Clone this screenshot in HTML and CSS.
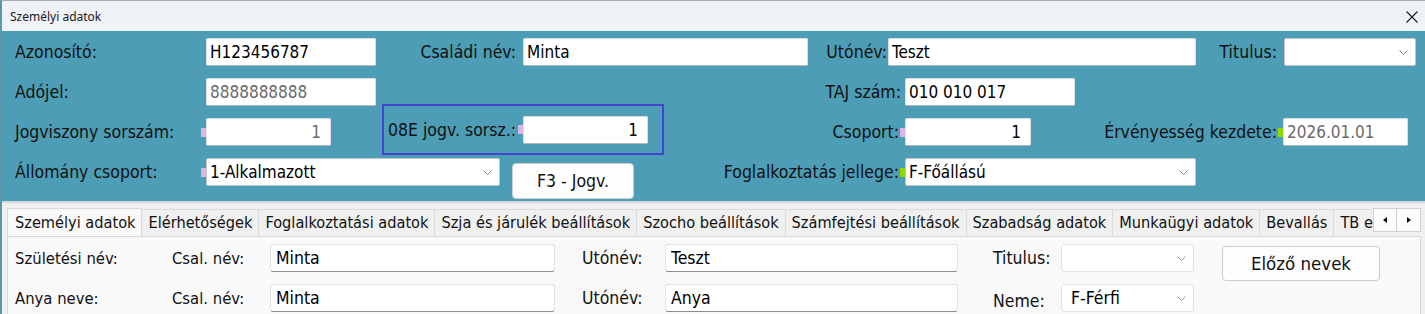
FILE: index.html
```html
<!DOCTYPE html>
<html lang="hu">
<head>
  <meta charset="UTF-8" />
  <title>Személyi adatok</title>
  <link rel="stylesheet" href="styles.css">
</head>
<body>
  <div class="window">
    <div class="titlebar">
      <span class="title">Személyi adatok</span>
      <svg class="close" width="12" height="12" viewBox="0 0 12 12">
        <path d="M0.5 0.5 L11.5 11.5 M11.5 0.5 L0.5 11.5" stroke="#1a1a1a" stroke-width="1.1" fill="none"/>
      </svg>
    </div>

    <div class="header">
      <div class="row">
        <label class="lbl w191">Azonosító:</label>
        <input class="inp w170" type="text" value="H123456787">
        <label class="lbl right w147 pr7">Családi név:</label>
        <input class="inp w285" type="text" value="Minta">
        <label class="lbl right w80 pr1">Utónév:</label>
        <input class="inp w308" type="text" value="Teszt">
        <label class="lbl right w88 pr7">Titulus:</label>
        <div class="sel w132"><span></span><svg class="chev" width="9" height="5" viewBox="0 0 9 5"><path d="M0.5 0.5 L4.5 4.5 L8.5 0.5" stroke="#888" fill="none"/></svg></div>
      </div>

      <div class="row">
        <label class="lbl w191">Adójel:</label>
        <input class="inp w170 gray" type="text" value="8888888888">
        <label class="lbl right w529 pr4">TAJ szám:</label>
        <input class="inp w170" type="text" value="010 010 017">
      </div>

      <div class="row">
        <label class="lbl w186">Jogviszony sorszám:</label>
        <span class="mark pink"></span>
        <input class="inp w125 num gray" type="text" value="1">
        <span class="w51"></span>
        <div class="focusbox">
          <label class="lbl grow">08E jogv. sorsz.:</label>
          <span class="mark pink"></span>
          <input class="inp w125 num" type="text" value="1">
        </div>
        <label class="lbl right w236 pr1">Csoport:</label>
        <span class="mark pink"></span>
        <input class="inp w126 num" type="text" value="1">
        <label class="lbl right w247 pr1">Érvényesség kezdete:</label>
        <span class="mark green"></span>
        <input class="inp w125 gray" type="text" value="2026.01.01">
      </div>

      <div class="row top">
        <label class="lbl w186">Állomány csoport:</label>
        <span class="mark pink"></span>
        <div class="sel w294"><span>1-Alkalmazott</span><svg class="chev" width="9" height="5" viewBox="0 0 9 5"><path d="M0.5 0.5 L4.5 4.5 L8.5 0.5" stroke="#888" fill="none"/></svg></div>
        <button class="btn jogv">F3 - Jogv.</button>
        <label class="lbl right w266 pr1">Foglalkoztatás jellege:</label>
        <span class="mark green"></span>
        <div class="sel w291"><span>F-Főállású</span><svg class="chev" width="9" height="5" viewBox="0 0 9 5"><path d="M0.5 0.5 L4.5 4.5 L8.5 0.5" stroke="#888" fill="none"/></svg></div>
      </div>
    </div>

    <div class="tabarea">
      <div class="tabstrip">
        <div class="tablist">
          <div class="tab active">Személyi adatok</div>
          <div class="tab">Elérhetőségek</div>
          <div class="tab">Foglalkoztatási adatok</div>
          <div class="tab">Szja és járulék beállítások</div>
          <div class="tab">Szocho beállítások</div>
          <div class="tab">Számfejtési beállítások</div>
          <div class="tab">Szabadság adatok</div>
          <div class="tab">Munkaügyi adatok</div>
          <div class="tab">Bevallás</div>
          <div class="tab">TB ellátások</div>
        </div>
        <div class="scrollbtns">
          <span class="sbtn"><svg width="4" height="6" viewBox="0 0 4 6"><path d="M4 0 L0 3 L4 6 Z" fill="#111"/></svg></span>
          <span class="sbtn"><svg width="4" height="6" viewBox="0 0 4 6"><path d="M0 0 L4 3 L0 6 Z" fill="#111"/></svg></span>
        </div>
      </div>

      <div class="tabpanel">
        <div class="prow">
          <label class="plbl w157">Születési név:</label>
          <label class="plbl w98">Csal. név:</label>
          <input class="pinp w285" type="text" value="Minta">
          <label class="nlbl w83 ml27">Utónév:</label>
          <input class="pinp w293" type="text" value="Teszt">
          <label class="nlbl w68 ml35">Titulus:</label>
          <div class="psel w133"><span></span><svg class="chev" width="9" height="5" viewBox="0 0 9 5"><path d="M0.5 0.5 L4.5 4.5 L8.5 0.5" stroke="#999" fill="none"/></svg></div>
          <button class="btn elozo">Előző nevek</button>
        </div>
        <div class="prow">
          <label class="plbl w157">Anya neve:</label>
          <label class="plbl w98">Csal. név:</label>
          <input class="pinp w285" type="text" value="Minta">
          <label class="nlbl w83 ml27">Utónév:</label>
          <input class="pinp w293" type="text" value="Anya">
          <label class="nlbl w68 ml35 low">Neme:</label>
          <div class="psel w133"><span>F-Férfi</span><svg class="chev" width="9" height="5" viewBox="0 0 9 5"><path d="M0.5 0.5 L4.5 4.5 L8.5 0.5" stroke="#999" fill="none"/></svg></div>
        </div>
      </div>
    </div>
  </div>
</body>
</html>
```

FILE: styles.css
```css
body {
  margin: 0;
  background: #f0f0f0;
  font-family: "DejaVu Sans Condensed", "DejaVu Sans", sans-serif;
  font-stretch: condensed;
  color: #111;
}
.window {
  height: 314px;
  border-top: 1px solid #a8acb0;
  border-left: 2px solid #5c97a6;
  box-sizing: border-box;
  overflow: hidden;
}
.titlebar {
  height: 30px;
  background: #eff2f6;
  display: flex;
  align-items: center;
  justify-content: space-between;
  padding: 0 7px 0 8px;
}
.title {
  font-family: "Noto Sans", sans-serif;
  font-stretch: normal;
  font-size: 12px;
  color: #1a1a1a;
}
.close {
  margin-top: 1px;
}

/* teal header */
.header {
  background: #4c9db5;
  padding: 7px 0 3px 13px;
  border-bottom: 2px solid #d4d8da;
  display: flex;
  flex-direction: column;
  gap: 12px;
}
.row {
  display: flex;
  align-items: center;
  height: 28px;
}
.row.top {
  align-items: flex-start;
  height: 40px;
}
.lbl {
  font-size: 17.5px;
  white-space: nowrap;
  flex-shrink: 0;
  line-height: 28px;
}
.lbl.right { text-align: right; }
.lbl.grow { flex: 1; padding-left: 2px; }
.inp, .sel {
  height: 28px;
  box-sizing: border-box;
  background: #fff;
  border: 1px solid #dedede;
  border-bottom-color: #b4b4b4;
  border-radius: 2px;
  font-family: inherit;
  font-stretch: condensed;
  font-size: 17px;
  color: #000;
  padding: 0 3px;
  flex-shrink: 0;
  outline: none;
}
.inp.gray { color: #6b6b6b; }
.inp.num { text-align: right; padding-right: 9px; }
.sel {
  display: flex;
  align-items: center;
  justify-content: space-between;
  border-color: #c4c4c4;
  padding: 0 7px 0 3px;
}
.mark {
  width: 5px;
  height: 9px;
  flex-shrink: 0;
}
.row.top .mark { margin-top: 10px; }
.mark.pink { background: #dcb5e8; }
.mark.green { background: #90d800; }
.focusbox {
  display: flex;
  align-items: center;
  width: 282px;
  height: 51px;
  box-sizing: border-box;
  border: 2px solid #4343cf;
  padding: 0 14px 0 2px;
  margin: -14px 0 -9px;
  flex-shrink: 0;
}
.btn {
  background: #fdfdfd;
  border: 1px solid #cfcfcf;
  border-radius: 4px;
  color: #111;
  font-family: inherit;
  font-stretch: condensed;
  flex-shrink: 0;
}
.jogv {
  width: 122px;
  height: 36px;
  margin: 5px 0 0 12px;
  font-size: 17.5px;
}

.w51 { width: 51px; flex-shrink: 0; }
.w68 { width: 68px; }
.w80 { width: 80px; }
.w83 { width: 83px; }
.w88 { width: 88px; }
.w98 { width: 98px; }
.w125 { width: 125px; }
.w126 { width: 126px; }
.w132 { width: 132px; }
.w133 { width: 133px; }
.w147 { width: 147px; }
.w157 { width: 157px; }
.w170 { width: 170px; }
.w186 { width: 186px; }
.w191 { width: 191px; }
.w236 { width: 236px; }
.w247 { width: 247px; }
.w266 { width: 266px; }
.w285 { width: 285px; }
.w291 { width: 291px; }
.w293 { width: 293px; }
.w294 { width: 294px; }
.w308 { width: 308px; }
.w529 { width: 529px; }
.pr1 { padding-right: 1px; box-sizing: border-box; }
.pr4 { padding-right: 4px; box-sizing: border-box; }
.pr7 { padding-right: 7px; box-sizing: border-box; }
.ml27 { margin-left: 27px; }
.ml35 { margin-left: 35px; }

/* tabs */
.tabarea {
  padding: 4px 4px 0 5px;
}
.tabstrip {
  display: flex;
  height: 29px;
}
.tablist {
  display: flex;
  width: 1366px;
  overflow: hidden;
  align-items: flex-end;
}
.tab {
  height: 27px;
  box-sizing: border-box;
  padding: 0 6px;
  line-height: 26px;
  font-size: 16.2px;
  white-space: nowrap;
  background: #f0f0f0;
  border: 1px solid #dadada;
  border-left: none;
  border-bottom: none;
  color: #111;
}
.tab.active {
  height: 29px;
  line-height: 28px;
  padding: 0 6px 0 7px;
  background: #f9f9f9;
  border-left: 1px solid #dadada;
  position: relative;
  margin-bottom: -1px;
  z-index: 1;
}
.scrollbtns {
  display: flex;
  margin-top: 1px;
  height: 24px;
}
.sbtn {
  width: 24px;
  height: 24px;
  box-sizing: border-box;
  background: #fdfdfd;
  border: 1px solid #d2d2d2;
  display: flex;
  align-items: center;
  justify-content: center;
}
.sbtn + .sbtn { border-left: none; }
.tabpanel {
  background: #f9f9f9;
  border: 1px solid #dadada;
  height: 90px;
  padding: 7px 0 0 7px;
  display: flex;
  flex-direction: column;
  gap: 12px;
}
.prow {
  display: flex;
  align-items: center;
  height: 28px;
}
.plbl {
  font-size: 16.5px;
  white-space: nowrap;
  flex-shrink: 0;
}
.nlbl {
  font-size: 17.5px;
  white-space: nowrap;
  flex-shrink: 0;
}
.nlbl.low { padding-top: 5px; }
.pinp, .psel {
  height: 28px;
  box-sizing: border-box;
  background: #fff;
  border: 1px solid #e2e2e2;
  border-bottom-color: #8c8c8c;
  border-radius: 3px;
  font-family: inherit;
  font-stretch: condensed;
  font-size: 17.5px;
  color: #000;
  padding: 0 5px;
  flex-shrink: 0;
  outline: none;
}
.psel {
  display: flex;
  align-items: center;
  justify-content: space-between;
  border-bottom-color: #e2e2e2;
  padding: 0 7px 0 9px;
}
.elozo {
  width: 158px;
  height: 35px;
  margin: 2px 0 -9px 28px;
  align-self: flex-start;
  font-size: 18.5px;
  border-color: #cbcbcb;
}
```
